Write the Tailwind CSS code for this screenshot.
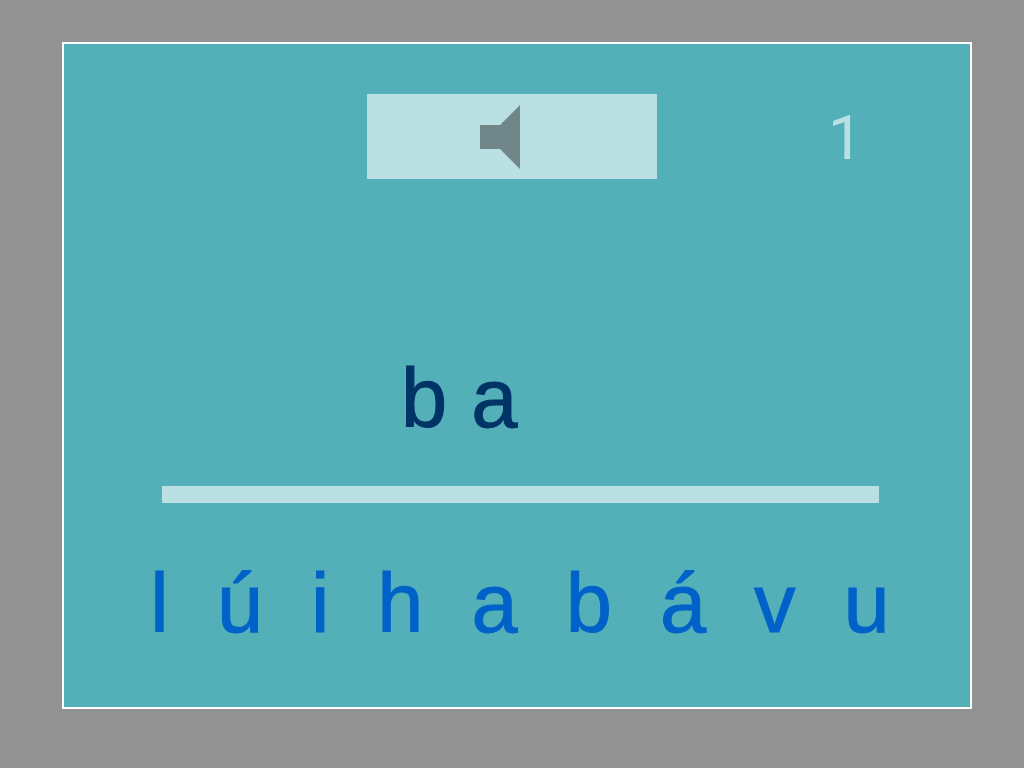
<!DOCTYPE html>
<html lang="pt">

<head>
    <meta charset="UTF-8">
    <meta name="viewport" content="width=device-width, initial-scale=1.0">
    <title>ba</title>
    <script src="https://cdn.jsdelivr.net/npm/@tailwindcss/browser@4"></script>
</head>

<body class="bg-[#929292] font-['Liberation_Sans',Arial,sans-serif]">
    <div class="flex min-h-screen pt-[42px] pr-[52px] pb-[59px] pl-[62px]">
        <main class="flex-1 border-2 border-white bg-[#54b0b8] pt-[50px]">

            <!-- Sound button and exercise number -->
            <header class="grid grid-cols-[1fr_290px_1fr] pr-[10px]">
                <button type="button" aria-label="Som" class="col-start-2 flex h-[85px] items-center bg-[#bae0e3] pl-[113px]">
                    <svg class="h-16 w-10" viewBox="0 0 40 64" fill="#708689" aria-hidden="true">
                        <path d="M0 20H20L40 0V64L20 44H0Z" />
                    </svg>
                </button>
                <p class="pl-[171px] pt-2 font-[Roboto,sans-serif] text-[62px] leading-[72px] text-[#bae0e3]">1</p>
            </header>

            <!-- Answer so far -->
            <div class="mt-[172px] flex gap-6 pl-[337px] text-[83px] leading-[96px] text-[#003366] [-webkit-text-stroke:1px]">
                <span>b</span>
                <span>a</span>
            </div>

            <div class="mt-[39px] mr-[91px] ml-[98px] h-[17px] bg-[#bae0e3]"></div>

            <!-- Letters to choose from -->
            <div class="mt-[53px] flex justify-center gap-12 pl-[6px] text-[83px] leading-[96px] text-[#0062c8] [-webkit-text-stroke:1px]">
                <button type="button">l</button>
                <button type="button">ú</button>
                <button type="button">i</button>
                <button type="button">h</button>
                <button type="button">a</button>
                <button type="button">b</button>
                <button type="button">á</button>
                <button type="button">v</button>
                <button type="button">u</button>
            </div>
        </main>
    </div>
</body>

</html>
